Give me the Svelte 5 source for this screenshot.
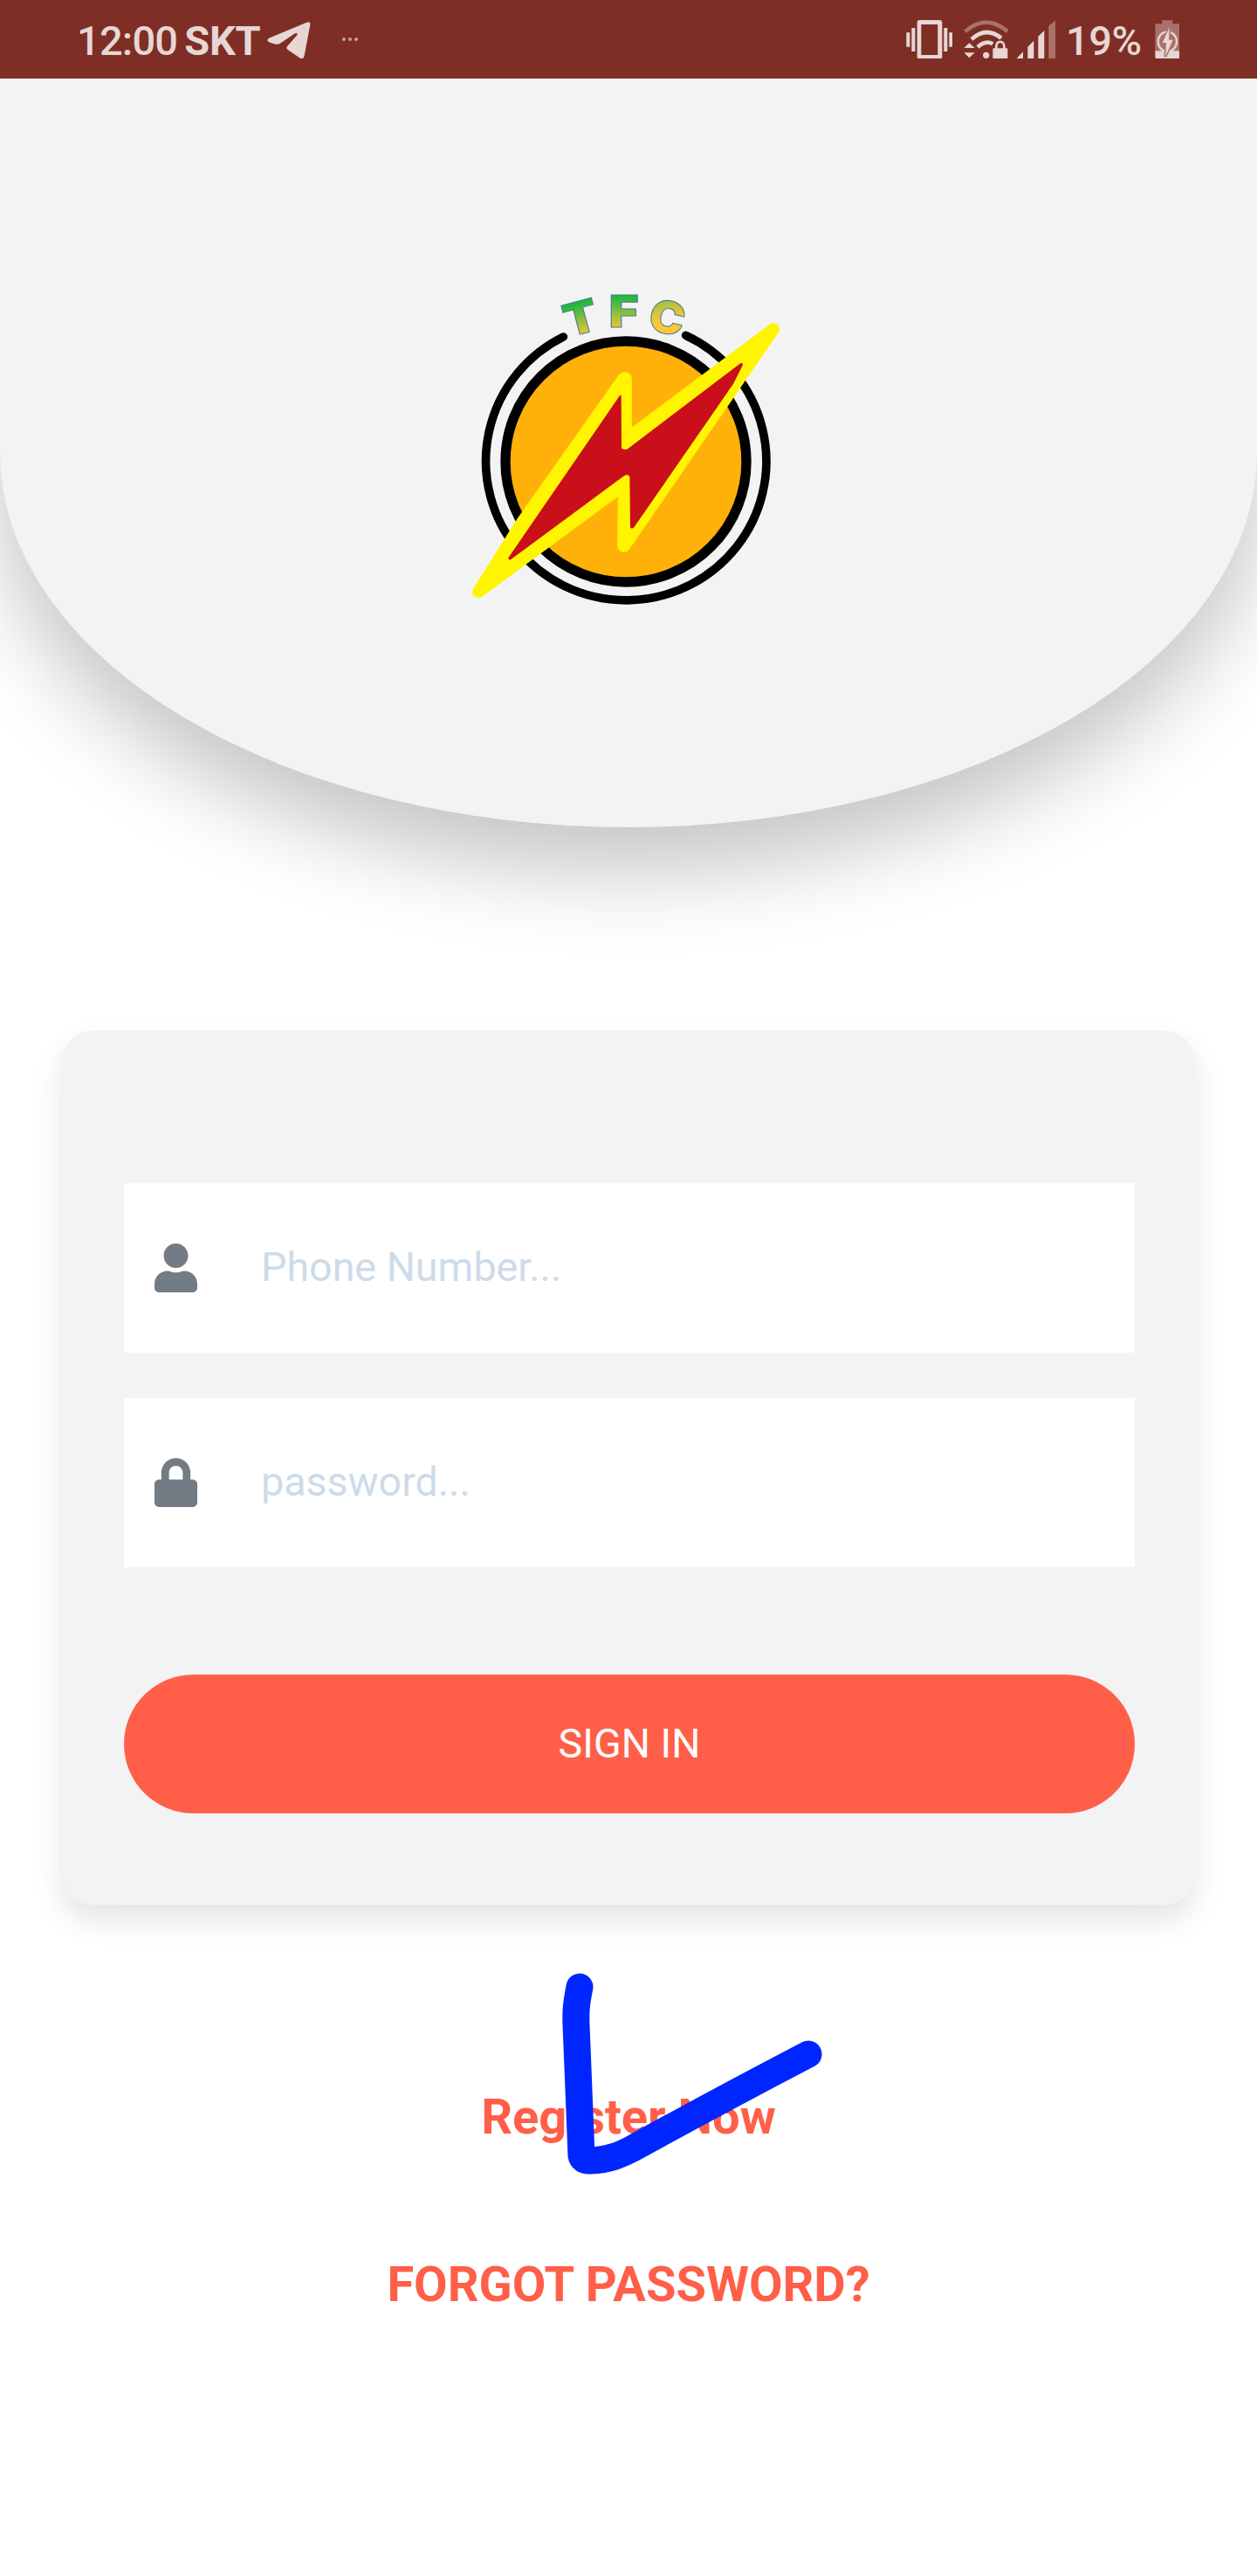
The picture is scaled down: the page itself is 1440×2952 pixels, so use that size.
<script>
    let phone = $state('')
    let password = $state('')
</script>

<div class="screen">
    <div class="statusbar">
        <div class="side">
            <span class="time">12:00</span>
            <span class="carrier">SKT</span>
            <svg class="plane" viewBox="710 75 148 127">
                <path d="M716 131 L846 77 Q860 72 858 86 L838 192 Q835 205 824 200 L782 172 Q773 166 780 158 L813 121 Q817 112 806 115 L757 148 Q748 154 738 152 L716 145 Q706 138 716 131Z" />
            </svg>
            <svg class="dots" viewBox="0 0 54 12">
                <circle cx="6" cy="6" r="6" />
                <circle cx="27" cy="6" r="6" />
                <circle cx="48" cy="6" r="6" />
            </svg>
        </div>
        <div class="side">
            <svg class="vibrate" viewBox="53 66 160 134">
                <path d="M54 109h12v49H54zM72 93h12v81H72zM183 93h12v81h-12zM201 109h12v49h-12z" />
                <path fill-rule="evenodd" d="M100 66h68q9 0 9 9v116q0 9-9 9h-68q-9 0-9-9V75q0-9 9-9zM105 81v105h57V81z" />
            </svg>
            <svg class="wifi" viewBox="251 68 155 133">
                <path class="arc dim" d="M256 107 Q328 45 402 107" />
                <path class="arc" d="M278 134 Q328 88 380 130" />
                <path class="arc" d="M299 161 Q325 136 351 150" />
                <circle cx="328" cy="189" r="11" />
                <path d="M252 164l18-17 19 17zM252 180h37l-19 18z" />
                <path d="M355 165h4v-7a17 19 0 0 1 35 0v7h4q4 0 4 4v28q0 4-4 4h-43q-4 0-4-4v-28q0-4 4-4zm12 0h19v-7a9.500 11 0 0 0-19 0z" />
            </svg>
            <svg class="signal" viewBox="431 68 136 133">
                <path d="M432 201l23-24v24zM471 201v-41l21-21v62zM507 201v-77l21-20v97z" />
                <path class="dim" d="M543 201V88l24-20v133z" />
            </svg>
            <span class="percent">19%</span>
            <svg class="battery" viewBox="908 68 86 133">
                <path class="dim" d="M933 69h36v12h24v94h-84V81h24z" />
                <path d="M909 174h84v21q0 6-6 6h-72q-6 0-6-6z" />
                <ellipse class="ring" cx="951" cy="142" rx="32" ry="34" />
                <path class="bolt" d="M958 93l-24 53h13l-3 48 26-58h-14z" />
            </svg>
        </div>
    </div>

    <header>
        <svg class="logo" viewBox="0 0 1200 1170">
            <defs>
                <linearGradient id="tf" x1="0" y1="0" x2="0" y2="1">
                    <stop offset="0.2" stop-color="#13b73f" />
                    <stop offset="0.82" stop-color="#f0c63a" />
                </linearGradient>
                <linearGradient id="c" x1="0" y1="0" x2="0.3" y2="1">
                    <stop offset="0.15" stop-color="#7cbf45" />
                    <stop offset="0.65" stop-color="#fdc73b" />
                </linearGradient>
            </defs>
            <path class="outer" d="M376 198A482 478 0 1 0 797 193" />
            <circle class="inner" cx="591" cy="627" r="414" />
            <path
                class="yellow"
                d="M1086 156Q1103 147 1116 160Q1122 171 1112 186L1100 203L604 925Q598 937 583 937Q565 935 563 917L565 745L94 1092Q80 1098 69 1088Q62 1078 70 1060L220 822L567 330Q575 320 590 320Q608 322 610 342V512Z"
            />
            <path
                class="red"
                d="M985 289Q994 286 992 296L960 360L619 853Q611 861 606 853L604 680Q602 672 592 673L583 677L237 933L195 964Q185 966 188 956L570 400Q574 396 575 402L576 581Q584 588 596 584Z"
            />
            <g class="letters">
                <text transform="translate(449 185) rotate(-15) scale(1.1 1)" fill="url(#tf)">T</text>
                <text transform="translate(584 165) scale(1.14 1)" fill="url(#tf)">F</text>
                <text transform="translate(720 185) rotate(14) scale(1.06 1)" fill="url(#c)">C</text>
            </g>
        </svg>
    </header>

    <form class="card">
        <div class="field">
            <svg class="icon" viewBox="0 0 448 512">
                <path d="M224 256c70.700 0 128-57.300 128-128S294.700 0 224 0 96 57.300 96 128s57.300 128 128 128zm89.600 32h-16.700c-22.200 10.200-46.900 16-72.900 16s-50.600-5.800-72.900-16h-16.700C60.200 288 0 348.200 0 422.400V464c0 26.500 21.500 48 48 48h352c26.500 0 48-21.500 48-48v-41.600c0-74.200-60.200-134.400-134.400-134.400z" />
            </svg>
            <input type="tel" placeholder="Phone Number..." bind:value={phone}>
        </div>
        <div class="field">
            <svg class="icon" viewBox="0 0 448 512">
                <path d="M400 224h-24v-72C376 68.200 307.800 0 224 0S72 68.200 72 152v72H48c-26.500 0-48 21.500-48 48v192c0 26.500 21.500 48 48 48h352c26.500 0 48-21.500 48-48V272c0-26.500-21.500-48-48-48zm-104 0H152v-72c0-39.700 32.300-72 72-72s72 32.300 72 72v72z" />
            </svg>
            <input type="password" placeholder="password..." bind:value={password}>
        </div>
        <button type="button">SIGN IN</button>
    </form>

    <div class="links">
        <div class="register">
            <a href="#register">Register Now</a>
            <svg class="mark" viewBox="640 2255 310 245">
                <path d="M665 2277C661 2297 660.500 2305 661 2320L667 2470Q668 2476 676 2476C700 2475 712 2469 724 2463Q820 2410 927 2354" />
            </svg>
        </div>
        <a href="#forgot">FORGOT PASSWORD?</a>
    </div>
</div>

<style>
    :global(body){
        margin: 0;
        background-color: white;
    }
    .screen{
        width: 1440px;
        height: 2952px;
        overflow: hidden;
        display: flex;
        flex-direction: column;
        font-family: Roboto, sans-serif;
        background-color: white;
    }
    .statusbar{
        flex: none;
        box-sizing: border-box;
        height: 90px;
        padding: 0 88.700px 0 88px;
        display: flex;
        justify-content: space-between;
        background-color: #7e2e25;
        color: #e6d6d4;
        position: relative;
        z-index: 1;
        svg{
            flex: none;
            fill: #e6d6d4;
        }
        .dim{
            fill: #a9716b;
        }
        span{
            font-size: 47px;
            font-weight: 500;
            line-height: 90px;
            padding-top: 3px;
            white-space: nowrap;
        }
    }
    .side{
        display: flex;
        align-items: center;
        height: 90px;
        .time{
            letter-spacing: -.8px;
        }
        .carrier{
            font-weight: 700;
            margin-left: 8px;
            letter-spacing: -.3px;
        }
        .plane{
            width: 49.300px;
            height: 42.300px;
            margin: 2px 0 0 8px;
        }
        .dots{
            width: 18px;
            height: 4px;
            margin-left: 36px;
            opacity: .7;
        }
        .vibrate{
            width: 53.300px;
            height: 44.700px;
        }
        .wifi{
            width: 51.700px;
            height: 44.300px;
            margin-left: 12.700px;
            .arc{
                fill: none;
                stroke: #e6d6d4;
                stroke-width: 14;
            }
            .arc.dim{
                stroke: #a9716b;
            }
        }
        .signal{
            width: 45.300px;
            height: 44.300px;
            margin-left: 8.300px;
        }
        .percent{
            margin-left: 12px;
            letter-spacing: -.5px;
        }
        .battery{
            width: 28.700px;
            height: 44.300px;
            margin-left: 15px;
            .ring{
                fill: none;
                stroke: #e6d6d4;
                stroke-width: 7;
            }
            .bolt{
                stroke: #a9716b;
                stroke-width: 9;
                paint-order: stroke;
            }
        }
    }
    header{
        flex: none;
        box-sizing: border-box;
        height: 858px;
        padding-top: 230px;
        display: flex;
        justify-content: center;
        align-items: flex-start;
        background-color: #f3f3f3;
        border-radius: 0 0 50% 50%;
        box-shadow: 0 49px 98px rgba(0, 0, 0, 0.23);
    }
    .logo{
        width: 400px;
        height: 390px;
        .outer{
            fill: none;
            stroke: #000;
            stroke-width: 29;
            stroke-linecap: round;
        }
        .inner{
            fill: #ffb10a;
            stroke: #000;
            stroke-width: 34;
        }
        .yellow{
            fill: #fff500;
            stroke: #fff500;
            stroke-width: 3;
        }
        .red{
            fill: #c90f1a;
        }
        .letters{
            font-family: Inter, sans-serif;
            font-weight: 900;
            font-size: 154px;
            text-anchor: middle;
            stroke: #4a7c8c;
            stroke-width: 3;
        }
    }
    .card{
        flex: none;
        box-sizing: border-box;
        width: 1298px;
        height: 1002px;
        margin: 233px auto 0 71px;
        padding: 175px 69px 0 71px;
        display: flex;
        flex-direction: column;
        background-color: #f3f3f3;
        border-radius: 36px;
        box-shadow: 0 17px 35px rgba(0, 0, 0, 0.11);
        button{
            height: 159px;
            margin-top: 71px;
            padding: 0 0 2px;
            border: none;
            border-radius: 80px;
            background-color: #ff5f48;
            color: white;
            font-family: inherit;
            font-size: 46.600px;
            cursor: pointer;
        }
    }
    .field{
        height: 194px;
        margin-bottom: 52px;
        padding-left: 35px;
        display: flex;
        align-items: center;
        background-color: white;
        .icon{
            flex: none;
            width: 49px;
            height: 56px;
            fill: #737b84;
        }
        input{
            flex: 1;
            min-width: 0;
            height: 100%;
            box-sizing: border-box;
            margin-left: 73px;
            padding: 0 0 2px;
            border: none;
            outline: none;
            background-color: transparent;
            font-family: inherit;
            font-size: 46.600px;
            &::placeholder{
                color: #cddbe9;
            }
        }
    }
    .links{
        margin-top: 210px;
        display: flex;
        flex-direction: column;
        align-items: center;
        gap: 126px;
        a{
            color: #ff5f48;
            font-size: 56px;
            font-weight: 700;
            line-height: 66px;
            text-decoration: none;
            white-space: nowrap;
        }
    }
    .register{
        position: relative;
        display: flex;
    }
    /* hand drawn tick lying over the link */
    .mark{
        position: absolute;
        left: 88px;
        top: -138px;
        width: 310px;
        height: 245px;
        pointer-events: none;
        path{
            fill: none;
            stroke: #0026ff;
            stroke-width: 31;
            stroke-linecap: round;
            stroke-linejoin: round;
        }
    }
</style>
